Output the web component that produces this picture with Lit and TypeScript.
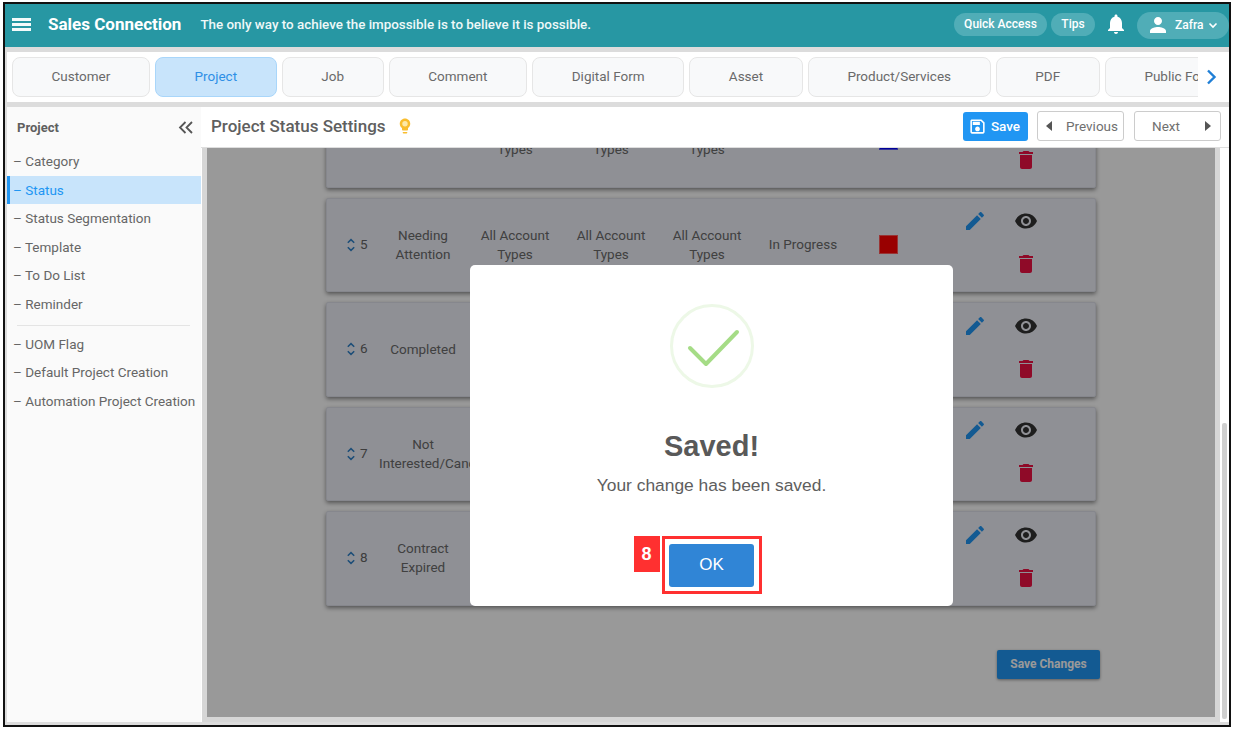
import { LitElement, html, css, svg } from "lit";
import { customElement } from "lit/decorators.js";

const P = {
  bell: "M12 22c1.1 0 2-.9 2-2h-4c0 1.1.9 2 2 2zm6-6v-5c0-3.07-1.63-5.64-4.5-6.32V4c0-.83-.67-1.5-1.5-1.5s-1.5.67-1.5 1.5v.68C7.63 5.36 6 7.92 6 11v5l-2 2v1h16v-1l-2-2z",
  person: "M12 12c2.21 0 4-1.79 4-4s-1.79-4-4-4-4 1.79-4 4 1.79 4 4 4zm0 2c-2.67 0-8 1.34-8 4v2h16v-2c0-2.66-5.33-4-8-4z",
  save: "M17 3H5c-1.11 0-2 .9-2 2v14c0 1.1.89 2 2 2h14c1.1 0 2-.9 2-2V7l-4-4zm2 16H5V5h11.17L19 7.83V19zm-7-7c-1.66 0-3 1.34-3 3s1.34 3 3 3 3-1.34 3-3-1.34-3-3-3zM6 6h9v4H6z",
  pencil: "M3 17.25V21h3.75L17.81 9.94l-3.75-3.75L3 17.25zM20.71 7.04c.39-.39.39-1.02 0-1.41l-2.34-2.34c-.39-.39-1.02-.39-1.41 0l-1.83 1.83 3.75 3.75 1.83-1.83z",
  eye: "M12 4.5C7 4.5 2.73 7.61 1 12c1.73 4.39 6 7.5 11 7.5s9.27-3.11 11-7.5c-1.73-4.39-6-7.5-11-7.5zM12 17c-2.76 0-5-2.24-5-5s2.24-5 5-5 5 2.24 5 5-2.24 5-5 5zm0-8c-1.66 0-3 1.34-3 3s1.34 3 3 3 3-1.34 3-3-1.34-3-3-3z",
  trash: "M6 19c0 1.1.9 2 2 2h8c1.1 0 2-.9 2-2V7H6v12zM19 4h-3.5l-1-1h-5l-1 1H5v2h14V4z",
  bulbOuter: "M9 21c0 .55.45 1 1 1h4c.55 0 1-.45 1-1v-1H9v1zm3-19C8.14 2 5 5.14 5 9c0 2.38 1.19 4.47 3 5.74V17c0 .55.45 1 1 1h6c.55 0 1-.45 1-1v-2.26c1.81-1.27 3-3.36 3-5.74 0-3.86-3.14-7-7-7z",
};
const icon = (d: string, size: number, cls = "") =>
  html`<svg class=${cls} width=${size} height=${size} viewBox="0 0 24 24" fill="currentColor">${svg`<path d=${d}></path>`}</svg>`;

const TABS = ["Customer", "Project", "Job", "Comment", "Digital Form", "Asset", "Product/Services", "PDF", "Public Form"];
const SIDE1 = ["Category", "Status", "Status Segmentation", "Template", "To Do List", "Reminder"];
const SIDE2 = ["UOM Flag", "Default Project Creation", "Automation Project Creation"];
const ROWS = [
  { n: 4, name: ["Quoted"], stage: "In Progress", color: "#0000ff" },
  { n: 5, name: ["Needing", "Attention"], stage: "In Progress", color: "#ff0000" },
  { n: 6, name: ["Completed"], stage: "Completed", color: "#00aa00" },
  { n: 7, name: ["Not", "Interested/Cancelled"], stage: "Closed", color: "#777777" },
  { n: 8, name: ["Contract", "Expired"], stage: "Closed", color: "#333333" },
];

@customElement("app-root")
export class AppRoot extends LitElement {
  static styles = css`
    :host { display: block; width: 1235px; height: 729px; background: #fff; overflow: hidden; font-family: Roboto, "Liberation Sans", sans-serif; }
    * { box-sizing: border-box; }
    .frame { margin: 2px 0 0 3px; width: 1228px; height: 725px; border: 2px solid #111; background: #dcdcdc; display: flex; flex-direction: column; position: relative; }
    .header { height: 43px; flex: none; background: #2797a3; color: #fff; display: flex; align-items: center; padding: 0 0 3px 7px; }
    .burger { width: 19px; height: 13px; display: flex; flex-direction: column; justify-content: space-between; margin-right: 17px; }
    .burger i { display: block; height: 3px; background: #f4fafa; }
    .brand { font-size: 17px; font-weight: 700; margin-right: 19px; white-space: nowrap; }
    .tag { font-size: 13.4px; font-weight: 500; color: #eef8f8; flex: 1; white-space: nowrap; }
    .chip { height: 23px; border-radius: 12px; background: #50adb7; font-size: 12px; font-weight: 500; display: flex; align-items: center; justify-content: center; margin-right: 4px; }
    .chip.qa { width: 93px; }
    .chip.tips { width: 44px; }
    .bell { margin: 0 9px 0 5px; display: block; flex: none; }
    .user { width: 92px; height: 27px; border-radius: 13.5px; background: #50adb7; display: flex; align-items: center; font-size: 12px; font-weight: 500; padding-left: 9px; gap: 5px; flex: none; margin-top: 2px; }
    .tabs { margin: 5px 0 5px 2px; height: 50px; flex: none; background: #fff; display: flex; align-items: center; padding-left: 5px; }
    .tabrow { width: 1186px; flex: none; display: flex; gap: 5.25px; overflow: hidden; }
    .tab { flex: none; height: 40px; padding: 0 38.5px 2px; border: 1px solid #e6e6e6; border-radius: 8px; background: #f8f9fa; color: #6a6a6a; font-size: 13.5px; display: flex; align-items: center; white-space: nowrap; }
    .tab.on { background: #c8e4fb; border-color: #a9d6fa; color: #2e8fe6; }
    .next { flex: 1; display: flex; justify-content: center; color: #1f7fd6; padding-right: 4px; }
    .body { flex: 1; min-height: 0; display: flex; padding: 0 0 3px 2px; }
    .side { width: 194px; flex: none; background: #fafafa; font-size: 13.5px; color: #666; }
    .side-h { height: 40.2px; display: flex; align-items: center; justify-content: space-between; padding: 1px 7px 0 10px; font-size: 13px; font-weight: 700; color: #5f5f5f; }
    .item { height: 28.6px; display: flex; align-items: center; padding: 0 0 1px 6px; white-space: nowrap; }
    .item.on { background: #c8e4fb; color: #2196f3; border-left: 3px solid #2196f3; padding-left: 3px; }
    .rule { height: 1px; background: #e4e4e4; margin: 6px 11px 4px 10px; }
    .main { flex: 1; min-width: 0; background: #fff; display: flex; flex-direction: column; }
    .title { height: 41px; flex: none; border-bottom: 1px solid #dedede; display: flex; align-items: center; padding: 0 8px 2px 10px; }
    .title h1 { margin: 0; font-size: 17px; font-weight: 500; color: #5f5f5f; white-space: nowrap; }
    .bulb { margin-left: 10px; display: block; }
    .spacer { flex: 1; }
    .btn-save { width: 65px; height: 29px; background: #2196f3; color: #fff; border-radius: 3px; font-size: 13.5px; font-weight: 500; display: flex; align-items: center; justify-content: center; gap: 4px; margin-right: 9px; padding-right: 3px; }
    .btn-nav { width: 87px; height: 30px; border: 1px solid #ccc; border-radius: 3px; color: #707070; font-size: 13.5px; display: flex; align-items: center; justify-content: space-between; padding: 0 5px 0 8px; }
    .btn-nav.prev { margin-right: 10px; }
    .btn-nav.nxt { padding: 0 9px 0 17px; }
    .tri-l { width: 0; height: 0; border: 5px solid transparent; border-left: 0; border-right: 6px solid #555; }
    .tri-r { width: 0; height: 0; border: 5px solid transparent; border-right: 0; border-left: 6px solid #555; }
    .work { flex: 1; min-height: 0; display: flex; padding-left: 1px; }
    .panel { width: 1018px; flex: none; position: relative; overflow: hidden; background: #fff; border: 5px solid #d6d6d6; border-top: 0; }
    .dim { position: absolute; inset: 0 -5px -5px -5px; background: rgba(0,0,0,.4); }
    .list { margin-top: -55px; padding: 0 119px; display: flex; flex-direction: column; gap: 10px; }
    .card { height: 94.5px; flex: none; background: #eef0f8; border: 1px solid #dfe2ec; border-radius: 2px; box-shadow: 0 2px 4px rgba(0,0,0,.45); display: grid; grid-template-columns: 52px 88px 96px 96px 96px 96px 74px 1fr; align-items: center; color: #6b6b6b; font-size: 13.5px; line-height: 19px; text-align: center; }
    .ord { display: flex; align-items: center; padding-left: 19px; gap: 4px; color: #666; }
    .ord span { margin-top: -1px; }
    .sw { width: 19px; height: 19px; justify-self: center; border: 1px solid rgba(255,255,255,.35); margin-left: 1px; }
    .acts { display: grid; grid-template-columns: 51px 51px; grid-template-rows: 43px 43px; justify-content: start; padding-left: 24px; align-items: center; justify-items: center; margin-top: -4px; }
    .pen { color: #2196f3; }
    .eye { color: #333; }
    .del { color: #ee1144; grid-column: 2; }
    .cell { white-space: nowrap; }
    .save-ch { align-self: flex-end; margin: 34px -4px 0 0; width: 103px; height: 29px; background: #2196f3; color: #fff; font-size: 12px; font-weight: 700; border-radius: 2px; display: flex; align-items: center; justify-content: center; box-shadow: 0 1px 3px rgba(0,0,0,.4); }
    .track { flex: 1; position: relative; }
    .thumb { position: absolute; left: 2px; width: 5px; top: 275px; bottom: 3px; background: #cfcfcf; border-radius: 2px; }
    .modal { position: absolute; left: 465px; top: 261px; width: 483px; height: 341px; background: #fff; border-radius: 5px; display: flex; flex-direction: column; align-items: center; font-family: "Liberation Sans", Arial, sans-serif; padding-top: 39px; }
    .ring { display: block; flex: none; }
    .modal h2 { margin: 41px 0 0; font-size: 29px; line-height: 34px; font-weight: 700; color: #595959; }
    .modal p { margin: 11px 0 0; font-size: 17.4px; line-height: 22px; color: #5e5e5e; }
    .ok-box { position: relative; margin-top: 40px; width: 100px; height: 58px; flex: none; border: 3px solid #ff3030; display: flex; align-items: center; justify-content: center; }
    .ok { width: 85px; height: 43px; background: #3085d6; color: #fff; font-size: 17px; border-radius: 3px; display: flex; align-items: center; justify-content: center; }
    .badge { position: absolute; right: 100%; top: -3px; margin-right: 5px; width: 26px; height: 36px; background: #ff3030; color: #fff; font-weight: 700; font-size: 18px; display: flex; align-items: center; justify-content: center; }
  `;

  private sortIcon() {
    return html`<svg width="10" height="14" viewBox="0 0 10 14" fill="none" stroke="#2f80c8" stroke-width="1.5"><path d="M1.8 4.8 5 1.6 8.2 4.8M1.8 9.2 5 12.4 8.2 9.2"></path></svg>`;
  }

  private row(r: (typeof ROWS)[number]) {
    return html`<div class="card">
      <div class="ord">${this.sortIcon()}<span>${r.n}</span></div>
      <div class="cell">${r.name.map((l) => html`<div>${l}</div>`)}</div>
      ${[0, 1, 2].map(() => html`<div><div>All Account</div><div>Types</div></div>`)}
      <div>${r.stage}</div>
      <div class="sw" style="background:${r.color}"></div>
      <div class="acts">
        ${icon(P.pencil, 24, "pen")}
        ${icon(P.eye, 24, "eye")}
        ${icon(P.trash, 24, "del")}
      </div>
    </div>`;
  }

  render() {
    return html`<div class="frame">
      <div class="header">
        <div class="burger"><i></i><i></i><i></i></div>
        <div class="brand">Sales Connection</div>
        <div class="tag">The only way to achieve the impossible is to believe it is possible.</div>
        <div class="chip qa">Quick Access</div>
        <div class="chip tips">Tips</div>
        ${icon(P.bell, 24, "bell")}
        <div class="user">
          ${icon(P.person, 24)}
          <span>Zafra</span>
          <svg width="10" height="7" viewBox="0 0 10 7" fill="none" stroke="#fff" stroke-width="1.6"><path d="M1.5 1.5 5 5 8.5 1.5"></path></svg>
        </div>
      </div>
      <div class="tabs">
        <div class="tabrow">${TABS.map((t) => html`<div class="tab ${t === "Project" ? "on" : ""}">${t}</div>`)}</div>
        <div class="next"><svg width="11" height="16" viewBox="0 0 11 16" fill="none" stroke="currentColor" stroke-width="2.4"><path d="M2 1.5 8.5 8 2 14.5"></path></svg></div>
      </div>
      <div class="body">
        <div class="side">
          <div class="side-h"><span>Project</span>
            <svg width="16" height="13" viewBox="0 0 16 13" fill="none" stroke="#555" stroke-width="1.8"><path d="M7.5 1 2 6.5 7.5 12M14 1 8.5 6.5 14 12"></path></svg>
          </div>
          ${SIDE1.map((s) => html`<div class="item ${s === "Status" ? "on" : ""}">– ${s}</div>`)}
          <div class="rule"></div>
          ${SIDE2.map((s) => html`<div class="item">– ${s}</div>`)}
        </div>
        <div class="main">
          <div class="title">
            <h1>Project Status Settings</h1>
            <svg class="bulb" width="18" height="18" viewBox="0 0 24 24">
              <path d=${P.bulbOuter} fill="#f9bd2e"></path>
              <circle cx="12" cy="9" r="3.6" fill="#fde9a8"></circle>
            </svg>
            <div class="spacer"></div>
            <div class="btn-save">${icon(P.save, 19)}<span>Save</span></div>
            <div class="btn-nav prev"><i class="tri-l"></i><span>Previous</span></div>
            <div class="btn-nav nxt"><span>Next</span><i class="tri-r"></i></div>
          </div>
          <div class="work">
            <div class="panel">
              <div class="list">
                ${ROWS.map((r) => this.row(r))}
                <div class="save-ch">Save Changes</div>
              </div>
              <div class="dim"></div>
            </div>
            <div class="track"><div class="thumb"></div></div>
          </div>
        </div>
      </div>
      <div class="modal">
        <svg class="ring" width="84" height="84" viewBox="0 0 84 84" fill="none">
          <circle cx="42" cy="42" r="40.5" stroke="#edf8e7" stroke-width="3"></circle>
          <path d="M20 44 36 60 67 28" stroke="#a5dc86" stroke-width="4" stroke-linecap="round" stroke-linejoin="round"></path>
        </svg>
        <h2>Saved!</h2>
        <p>Your change has been saved.</p>
        <div class="ok-box">
          <div class="badge">8</div>
          <div class="ok">OK</div>
        </div>
      </div>
    </div>`;
  }
}
